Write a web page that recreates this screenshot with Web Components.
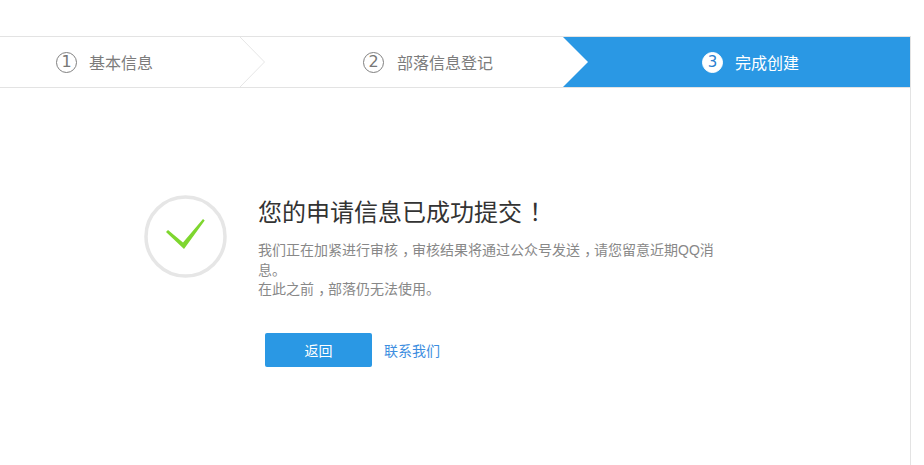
<!DOCTYPE html>
<html lang="zh">
<head>
<meta charset="utf-8">
<title>完成创建</title>
<style>
  html, body { margin: 0; padding: 0; background: #fff; }
  body { font-family: "Liberation Sans", "Noto Sans CJK SC", sans-serif; overflow: hidden; }
</style>
</head>
<body>
<app-page>
  <step-bar slot="steps">
    <step-item num="1" style="--pad: 56px; --gap: 12px" arrow="line">基本信息</step-item>
    <step-item num="2" style="--pad: 123px; --gap: 13px">部落信息登记</step-item>
    <step-item num="3" style="--pad: 139px; --gap: 12px" arrow="notch" active>完成创建</step-item>
  </step-bar>
  <result-panel slot="content">
    <span slot="heading">您的申请信息已成功提交<punct-mark>！</punct-mark></span>
    我们正在加紧进行审核<punct-mark>，</punct-mark>审核结果将通过公众号发送<punct-mark>，</punct-mark>请您留意近期QQ消<wbr>息。<br>在此之前<punct-mark>，</punct-mark>部落仍无法使用。
  </result-panel>
</app-page>

<script>
class AppPage extends HTMLElement {
  connectedCallback() {
    this.attachShadow({ mode: 'open' });
    this.shadowRoot.innerHTML = `
      <style>
        :host { display: block; width: 911px; height: 465px; box-sizing: border-box; padding-top: 36px; }
        .frame { height: 429px; box-sizing: border-box; border-right: 1px solid #e3e3e3; }
      </style>
      <div class="frame">
        <slot name="steps"></slot>
        <slot name="content"></slot>
      </div>
    `;
  }
}

class StepBar extends HTMLElement {
  connectedCallback() {
    this.attachShadow({ mode: 'open' });
    this.shadowRoot.innerHTML = `
      <style>
        :host {
          display: grid;
          grid-template-columns: 240px 323px 1fr;
          height: 52px;
          box-sizing: border-box;
          border-top: 1px solid #e3e3e3;
          border-bottom: 1px solid #e3e3e3;
        }
      </style>
      <slot></slot>
    `;
  }
}

class StepItem extends HTMLElement {
  connectedCallback() {
    const arrow = this.getAttribute('arrow');
    let svg = '';
    if (arrow === 'line') {
      svg = `<svg class="line" width="26" height="50" viewBox="0 0 26 50"><path d="M0 0L24.500 25L0 50" fill="none" stroke="#e6e6e6"/></svg>`;
    } else if (arrow === 'notch') {
      svg = `<svg class="notch" width="26" height="50" viewBox="0 0 26 50"><path d="M0 0L25 25L0 50Z" fill="#fff"/></svg>`;
    }
    this.attachShadow({ mode: 'open' });
    this.shadowRoot.innerHTML = `
      <style>
        :host {
          display: flex;
          align-items: center;
          position: relative;
          box-sizing: border-box;
          padding-left: var(--pad);
          font-size: 16px;
          color: #7c7c7c;
        }
        :host([active]) { background: #2a98e4; color: #fff; }
        .num {
          width: 21px;
          height: 21px;
          box-sizing: border-box;
          border: 1px solid #808080;
          border-radius: 50%;
          margin-right: var(--gap);
          display: flex;
          align-items: center;
          justify-content: center;
          font: 16px/1 "DejaVu Sans", sans-serif;
          color: #777;
        }
        :host([active]) .num { background: #fff; border-color: #fff; color: #2a7fd0; font-size: 15px; }
        svg { position: absolute; top: 0; display: block; }
        .line { left: 100%; }
        .notch { left: 0; }
        .label { font-family: "Noto Sans CJK SC", sans-serif; line-height: 20px; }
      </style>
      ${svg}
      <span class="num">${this.getAttribute('num')}</span>
      <span class="label"><slot></slot></span>
    `;
  }
}

class CheckBadge extends HTMLElement {
  connectedCallback() {
    this.attachShadow({ mode: 'open' });
    this.shadowRoot.innerHTML = `
      <style>
        :host { display: block; width: 83px; height: 83px; }
        svg { display: block; }
      </style>
      <svg width="83" height="83" viewBox="0 0 83 83">
        <circle cx="41.500" cy="41.500" r="39.500" fill="#fff" stroke="#e6e6e6" stroke-width="3.500"/>
        <path d="M22 37L24 35L39 47.500L59 24L60.700 25.500L40 54Z" fill="#7ed62f"/>
      </svg>
    `;
  }
}

// full-width punctuation sits in the middle of its em box in the reference
class PunctMark extends HTMLElement {
  connectedCallback() {
    this.attachShadow({ mode: 'open' });
    this.shadowRoot.innerHTML = `
      <style>
        :host { display: inline-block; padding-left: .3em; letter-spacing: -.3em; white-space: nowrap; }
      </style>
      <slot></slot>
    `;
  }
}

class ResultPanel extends HTMLElement {
  connectedCallback() {
    this.attachShadow({ mode: 'open' });
    this.shadowRoot.innerHTML = `
      <style>
        :host { display: flex; padding: 107px 0 0 144px; font-family: "Noto Sans CJK SC", sans-serif; }
        .body { margin-left: 31px; width: 460px; }
        h1 { margin: 0; font-size: 24px; line-height: 32px; font-weight: 400; color: #333; }
        .desc {
          margin-top: 14px;
          font-family: "Liberation Sans", "Noto Sans CJK SC", sans-serif;
          font-size: 14px;
          line-height: 19.500px;
          color: #888;
        }
        .actions { display: flex; align-items: center; margin: 33px 0 0 7px; }
        .back {
          width: 107px;
          height: 34px;
          border-radius: 2px;
          background: #2a98e4;
          color: #fff;
          font-size: 14px;
          display: flex;
          align-items: center;
          justify-content: center;
        }
        .contact { margin-left: 12px; font-size: 14px; color: #3d8ee0; }
      </style>
      <check-badge></check-badge>
      <div class="body">
        <h1><slot name="heading"></slot></h1>
        <div class="desc"><slot></slot></div>
        <div class="actions">
          <span class="back">返回</span>
          <span class="contact">联系我们</span>
        </div>
      </div>
    `;
  }
}

customElements.define('app-page', AppPage);
customElements.define('step-bar', StepBar);
customElements.define('step-item', StepItem);
customElements.define('check-badge', CheckBadge);
customElements.define('punct-mark', PunctMark);
customElements.define('result-panel', ResultPanel);
</script>
</body>
</html>
